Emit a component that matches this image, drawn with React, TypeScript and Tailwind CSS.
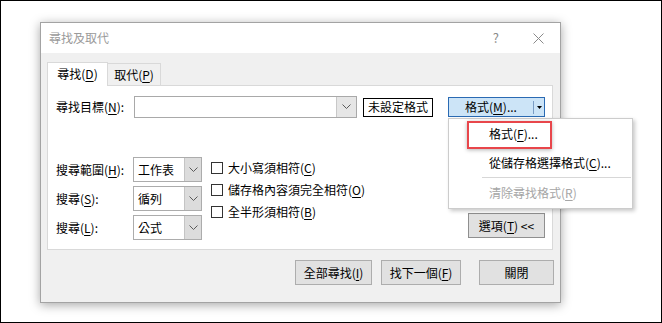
import React from "react";

const F = { fontFamily: '"Noto Sans CJK TC", "Noto Sans", sans-serif' };

function U({ c }: { c: string }) {
  return <span className="underline underline-offset-2 decoration-1">{c}</span>;
}

function Chevron() {
  return (
    <svg width="9" height="6" viewBox="0 0 9 6">
      <path d="M0.5 0.5 L4.5 4.5 L8.5 0.5" fill="none" stroke="#5a5a5a" strokeWidth="1" />
    </svg>
  );
}

function Select({ text }: { text: string }) {
  return (
    <div className="w-[69px] h-[25px] border border-[#acacac] bg-white flex items-stretch">
      <div className="flex-1 flex items-center pl-[4px] text-[12px] text-black">{text}</div>
      <div className="w-[17px] bg-[#dcdcdc] border-l border-[#c4c4c4] flex items-center justify-center">
        <Chevron />
      </div>
    </div>
  );
}

function Check({ children }: { children: React.ReactNode }) {
  return (
    <div className="h-[22px] flex items-center">
      <div className="w-[12px] h-[12px] border border-[#333] bg-white" />
      <div className="ml-[5px] text-[12px] text-black">{children}</div>
    </div>
  );
}

function Btn({ w, children }: { w: string; children: React.ReactNode }) {
  return (
    <div className={`${w} h-[25px] bg-[#e1e1e1] border border-[#adadad] flex items-center justify-center text-[12px] text-black`}>
      {children}
    </div>
  );
}

export default function App() {
  return (
    <div className="w-[662px] h-[323px] border border-black bg-white relative pl-[39px] pt-[21px] leading-[16px]" style={F}>
      <div className="w-[521px] h-[281px] border border-[#a3a3a3] bg-[#f0f0f0] flex flex-col shadow-[0_2px_10px_rgba(0,0,0,0.35)]">
        {/* title */}
        <div className="h-[30px] bg-white flex items-center pl-[8px] pr-[16px]">
          <div className="text-[12px] text-[#9a9a9a]">尋找及取代</div>
          <div className="ml-auto flex items-center">
            <div className="text-[13px] text-[#8a8a8a]">?</div>
            <svg className="ml-[34px]" width="11" height="11" viewBox="0 0 11 11">
              <path d="M0.5 0.5 L10.5 10.5 M10.5 0.5 L0.5 10.5" stroke="#8a8a8a" strokeWidth="1" />
            </svg>
          </div>
        </div>
        {/* content */}
        <div className="flex-1 px-[6px] pt-[9px] flex flex-col">
          <div className="flex items-end h-[23px]">
            <div className="w-[61px] h-[24px] -mb-px relative z-10 border border-b-0 border-[#d9d9d9] bg-white flex items-center justify-center text-[12px] text-black pb-[1px]">
              <span>尋找(<U c="D" />)</span>
            </div>
            <div className="w-[53px] h-[22px] border-t border-r border-[#d9d9d9] bg-[#f0f0f0] flex items-center justify-center text-[12px] text-black">
              <span>取代(<U c="P" />)</span>
            </div>
          </div>
          <div className="w-[506px] h-[165px] border border-[#d9d9d9] bg-white flex flex-col pl-[8px] pr-[7px]">
            {/* row 1 */}
            <div className="mt-[10px] flex items-center h-[22px]">
              <div className="w-[78px] text-[12px] text-black">尋找目標(<U c="N" />):</div>
              <div className="w-[223px] h-[22px] border border-[#a9a9a9] bg-white flex justify-end">
                <div className="w-[20px] bg-[#e6e6e6] border-l border-[#c8c8c8] flex items-center justify-center">
                  <Chevron />
                </div>
              </div>
              <div className="ml-[6px] w-[70px] h-[19px] border border-black bg-white flex items-center justify-center text-[12px] text-black">
                未設定格式
              </div>
              <div className="ml-[15px] w-[97px] h-[20px] border border-[#2a6ab3] bg-[#cce4f7] flex items-center">
                <div className="flex-1 flex items-center justify-center text-[12px] text-black">
                  <span>格式(<U c="M" />)...</span>
                </div>
                <div className="w-px h-[13px] bg-[#7a9cc4]" />
                <div className="w-[10px] flex items-center justify-center">
                  <svg width="5" height="3" viewBox="0 0 5 3">
                    <path d="M0 0 L5 0 L2.5 3 Z" fill="#000" />
                  </svg>
                </div>
              </div>
            </div>
            {/* middle */}
            <div className="mt-[39px] flex items-end">
              <div className="flex flex-col gap-[4px]">
                <div className="flex items-center h-[25px]">
                  <div className="w-[77px] text-[12px] text-black">搜尋範圍(<U c="H" />):</div>
                  <Select text="工作表" />
                </div>
                <div className="flex items-center h-[25px]">
                  <div className="w-[77px] text-[12px] text-black">搜尋(<U c="S" />):</div>
                  <Select text="循列" />
                </div>
                <div className="flex items-center h-[25px]">
                  <div className="w-[77px] text-[12px] text-black">搜尋(<U c="L" />):</div>
                  <Select text="公式" />
                </div>
              </div>
              <div className="ml-[9px] self-start flex flex-col">
                <Check>大小寫須相符(<U c="C" />)</Check>
                <Check>儲存格內容須完全相符(<U c="O" />)</Check>
                <Check>全半形須相符(<U c="B" />)</Check>
              </div>
              <div className="ml-auto mb-[2px] w-[77px] h-[25px] bg-[#e1e1e1] border border-[#8f8f8f] flex items-center justify-center text-[12px] text-black">
                <span>選項(<U c="T" />) &lt;&lt;</span>
              </div>
            </div>
          </div>
          {/* bottom buttons */}
          <div className="mt-[10px] flex justify-end">
            <Btn w="w-[77px]">全部尋找(<U c="I" />)</Btn>
            <div className="w-[9px]" />
            <Btn w="w-[80px]">找下一個(<U c="F" />)</Btn>
            <div className="w-[18px]" />
            <Btn w="w-[75px]">關閉</Btn>
          </div>
        </div>
      </div>

      {/* dropdown menu */}
      <div className="absolute left-[447px] top-[117px] w-[185px] h-[91px] bg-white border border-[#cccccc] shadow-[2px_2px_4px_rgba(0,0,0,0.22)] flex flex-col text-[12px]">
        <div className="h-[30px] flex items-center pl-[40px] text-black">
          <span>格式(<U c="F" />)...</span>
        </div>
        <div className="h-[28px] flex items-center pl-[40px] text-black">
          <span>從儲存格選擇格式(<U c="C" />)...</span>
        </div>
        <div className="ml-[33px] mr-[1px] h-px bg-[#d7d7d7]" />
        <div className="h-[30px] flex items-center pl-[40px] text-[#a6a6a6]">
          <span>清除尋找格式(<U c="R" />)</span>
        </div>
      </div>

      {/* red highlight */}
      <div className="absolute left-[466px] top-[120px] w-[85px] h-[28px] border-2 border-[#e8464b] shadow-[0_1px_4px_rgba(0,0,0,0.3)]" />
    </div>
  );
}
